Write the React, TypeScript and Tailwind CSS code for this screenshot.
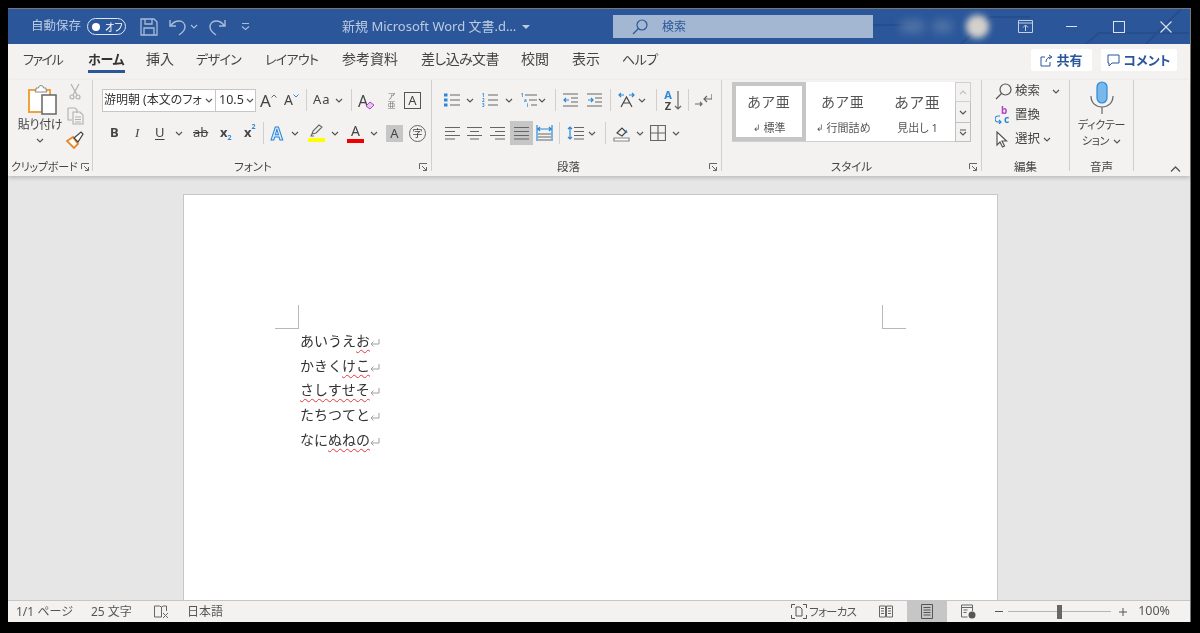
import React from "react";

const Chev = ({ className = "", color = "#555" }: { className?: string; color?: string }) => (
  <svg className={"shrink-0 " + className} width="8" height="5" viewBox="0 0 8 5" fill="none" stroke={color} strokeWidth="1.2">
    <path d="M1 1l3 3 3-3" />
  </svg>
);
const Sep = ({ className = "" }: { className?: string }) => <div className={"w-px h-[22px] bg-[#d2d0ce] shrink-0 " + className} />;
const Launcher = ({ className = "" }: { className?: string }) => (
  <svg className={className} width="9" height="9" viewBox="0 0 9 9" fill="none" stroke="#666" strokeWidth="1">
    <path d="M.5 6V.5H8M3 3l4.5 4.5M7.5 4v3.500H4" />
  </svg>
);
const L = ({ className, d, w = 16, h = 14, children }: { className?: string; d?: string; w?: number; h?: number; children?: React.ReactNode }) => (
  <svg className={"shrink-0 " + (className || "")} width={w} height={h} viewBox={`0 0 ${w} ${h}`} fill="none" stroke="#666" strokeWidth="1.2">
    {d && <path d={d} />}
    {children}
  </svg>
);
const Group = ({ w, label, labelClass = "", children, launcher = true }: { w: string; label: string; labelClass?: string; children: React.ReactNode; launcher?: boolean }) => (
  <div className={w + " h-[91px] border-r border-[#d2d0ce] flex flex-col shrink-0"}>
    <div className="flex-1 min-h-0">{children}</div>
    <div className="h-[14px] mb-[-3px] grid grid-cols-[1fr_auto_1fr] items-center text-[11.5px] leading-[14px] text-[#444]">
      <span />
      <span className={labelClass}>{label}</span>
      {launcher ? <Launcher className="justify-self-end mr-[3px]" /> : <span />}
    </div>
  </div>
);
const Marked = () => (
  <svg className="inline-block align-[-2px]" width="10" height="10" viewBox="0 0 10 10" fill="none" stroke="#a0a0a0" strokeWidth="1">
    <path d="M9 1v5H1M3.500 3.500L1 6l2.500 2.500" />
  </svg>
);
const Wavy = ({ children }: { children: React.ReactNode }) => (
  <span className="underline decoration-wavy decoration-[#e8373c] [text-decoration-thickness:1.4px] underline-offset-[3px]">{children}</span>
);
const Style = ({ head, label, arrow, big, w, selected }: { head: string; label: string; arrow?: boolean; big?: boolean; w: string; selected?: boolean }) => (
  <div className={w + " h-full flex flex-col items-center shrink-0 " + (selected ? "border-[4px] border-[#c6c6c6] pt-[4px]" : "pt-[8px]")}>
    <span className={(big ? "text-[15px] " : "text-[14px] ") + "leading-[24px] tracking-[1px] text-[#555]"}>{head}</span>
    <span className="mt-[6px] text-[11px] leading-[16px] text-[#555] flex items-center gap-[3px]">
      {arrow && <span className="text-[9px]">↲</span>}
      {label}
    </span>
  </div>
);

export default function App() {
  return (
    <div className="w-[1200px] h-[633px] bg-black overflow-hidden pt-[8px] pl-[8px] font-['Noto_Sans','Noto_Sans_CJK_JP',sans-serif] [font-feature-settings:'palt'] blur-[0.35px]">
      <div className="w-[1183px] h-[614px] flex flex-col bg-[#f3f2f1] border-t border-r border-[#777]">
        {/* Title bar */}
        <div className="h-[35px] shrink-0 bg-[#2b579a] flex items-center relative overflow-hidden text-[#bccbe0] text-[12.5px]">
          <svg className="absolute right-0 top-0" width="330" height="36" viewBox="0 0 330 36" fill="none" stroke="#264e8c" strokeWidth="2">
            <path d="M0 16h60M100 36L130 8M130 8h40M225 36l14-12h90M285 36l36-36" />
          </svg>
          <span className="ml-[23px] w-[50px] whitespace-nowrap relative">自動保存</span>
          <div className="ml-[6px] w-[39px] h-[17px] rounded-full border border-[#dfe6f0] flex items-center pl-[4px] relative">
            <div className="w-[8px] h-[8px] rounded-full bg-white" />
            <span className="ml-[5px] text-[10px] leading-none text-white">オフ</span>
          </div>
          <svg className="ml-[14px] shrink-0 relative" width="18" height="18" viewBox="0 0 18 18" fill="none" stroke="#a9bcd8" strokeWidth="1.3">
            <path d="M1 1h13l3 3v13H1zM5 1v5h7V1M4 17v-7h10v7" />
          </svg>
          <svg className="ml-[11px] shrink-0 relative" width="18" height="18" viewBox="0 0 18 18" fill="none" stroke="#a9bcd8" strokeWidth="1.4">
            <path d="M1 2v6h6M1.500 8C4 4 7 3 10 3c4 0 6 3 6 6 0 4-3 6-6 8" />
          </svg>
          <Chev className="ml-[3px]" color="#a9bcd8" />
          <svg className="ml-[11px] shrink-0 relative" width="17" height="18" viewBox="0 0 17 18" fill="none" stroke="#a9bcd8" strokeWidth="1.4">
            <path d="M16 2v6h-6M15.500 8C13 4 10 3 7 3 3 3 1 6 1 9c0 4 3 6 6 8" />
          </svg>
          <svg className="ml-[15px] shrink-0 relative" width="9" height="9" viewBox="0 0 9 9" fill="none" stroke="#a9bcd8" strokeWidth="1.100">
            <path d="M1 1.500h7M1 4.500l3.500 3 3.500-3" />
          </svg>
          <span className="ml-[92px] w-[172px] whitespace-nowrap relative text-[13px]">新規 Microsoft Word 文書.d…</span>
          <svg className="ml-[8px] shrink-0 relative" width="8" height="4" viewBox="0 0 8 4" fill="#bccbe0"><path d="M0 0h8L4 4z" /></svg>
          <div className="ml-[83px] w-[260px] h-[23px] bg-[#a3b7d2] flex items-center relative shrink-0">
            <svg className="ml-[19px]" width="16" height="16" viewBox="0 0 16 16" fill="none" stroke="#2b579a" strokeWidth="1.2">
              <circle cx="10" cy="6" r="5" /><path d="M6.500 9.500L1 15" />
            </svg>
            <span className="ml-[14px] text-[12px] text-[#2b579a]">検索</span>
          </div>
          <div className="ml-[27px] w-[25px] h-[13px] rounded-full bg-[#4f72a5] blur-[4px] shrink-0" />
          <div className="ml-[7px] w-[21px] h-[13px] rounded-full bg-[#4f72a5] blur-[4px] shrink-0" />
          <div className="ml-[13px] w-[23px] h-[23px] rounded-full bg-[#d4d1cb] blur-[3px] shrink-0" />
          <svg className="ml-[29px] shrink-0 relative" width="15" height="13" viewBox="0 0 15 13" fill="none" stroke="#c4d1e4" strokeWidth="1">
            <path d="M.5.500h14v12H.5zM.5 3h14M7.500 11V5.500M5 7.500l2.500-2.500L10 7.500" />
          </svg>
          <div className="ml-[33px] w-[11px] h-px bg-[#dbe3ef] shrink-0 relative" />
          <div className="ml-[36px] w-[12px] h-[12px] border border-[#dbe3ef] shrink-0 relative" />
          <svg className="ml-[35px] shrink-0 relative" width="12" height="12" viewBox="0 0 12 12" stroke="#dbe3ef" strokeWidth="1.100">
            <path d="M.5.500l11 11M11.500.500l-11 11" />
          </svg>
        </div>

        {/* Tabs */}
        <div className="h-[36px] shrink-0 flex items-start text-[14px] leading-[20px] text-[#444] pt-[5px] whitespace-nowrap">
          <span className="ml-[15px] w-[65px] text-[13px] tracking-[-1.400px]">ファイル</span>
          <span className="w-[58px] h-[24px] font-bold text-[#333]">
            <span className="inline-block w-[37px] h-[24px] text-[13px] tracking-[-0.3px] border-b-[3px] border-[#2b579a] overflow-visible">ホーム</span>
          </span>
          <span className="w-[50px]">挿入</span>
          <span className="w-[69px] text-[13px] tracking-[-0.600px]">デザイン</span>
          <span className="w-[77px] text-[13px] tracking-[-0.700px]">レイアウト</span>
          <span className="w-[79px]">参考資料</span>
          <span className="w-[100px] tracking-[-0.600px]">差し込み文書</span>
          <span className="w-[51px]">校閲</span>
          <span className="w-[50px]">表示</span>
          <span className="text-[13px] tracking-[-0.500px]">ヘルプ</span>
          <div className="ml-auto flex gap-[9px] mr-[13px] text-[13px]">
            <div className="w-[61px] h-[22px] bg-white rounded-[2px] flex items-center justify-center gap-[3px] font-bold text-[#2b579a]">
              <svg width="13" height="13" viewBox="0 0 13 13" fill="none" stroke="#2b579a" strokeWidth="1"><path d="M5 3H1v9h9V8M6 8c0-3 2-5 5-5M9 1l3 2-3 2" /></svg>
              共有
            </div>
            <div className="w-[76px] h-[22px] bg-white rounded-[2px] flex items-center justify-center gap-[3px] font-bold text-[#2b579a]">
              <svg width="13" height="13" viewBox="0 0 13 13" fill="none" stroke="#2b579a" strokeWidth="1"><path d="M1 1h11v8H5l-3 3V9H1z" /></svg>
              コメント
            </div>
          </div>
        </div>

        {/* Ribbon */}
        <div className="h-[96px] shrink-0 flex relative z-10 shadow-[0_2px_4px_rgba(0,0,0,0.18)] bg-[#f3f2f1] text-[#444]">
          {/* Clipboard */}
          <div className="w-[85px] h-[91px] border-r border-[#d2d0ce] flex flex-col shrink-0">
            <div className="flex-1 flex min-h-0">
              <div className="ml-[9px] w-[46px] flex flex-col items-center pt-[4px]">
                <svg className="ml-[6px]" width="30" height="31" viewBox="0 0 30 31" fill="none">
                  <path d="M1 6h21v22H1z" fill="#fff" stroke="#f0a33a" strokeWidth="2" />
                  <path d="M8 6V4h2.500a2.500 2.500 0 015 0H18v2l1 2H7z" fill="#fff" stroke="#8a8a8a" />
                  <rect x="14" y="11" width="14" height="19" fill="#fff" stroke="#666" strokeWidth="1.500" />
                </svg>
                <span className="mt-[2px] text-[12px] leading-[16px] tracking-[-0.300px] whitespace-nowrap">貼り付け</span>
                <Chev className="mt-[5px]" />
              </div>
              <div className="ml-[2px] w-[20px] flex flex-col items-center pt-[3px]">
                <svg width="12" height="17" viewBox="0 0 12 17" fill="none" stroke="#b0b0b0" strokeWidth="1.200">
                  <path d="M2 1l6 11M10 1L4 12" /><circle cx="3" cy="14" r="2" /><circle cx="9" cy="14" r="2" />
                </svg>
                <svg className="mt-[7px]" width="17" height="18" viewBox="0 0 17 18" fill="none" stroke="#b0b0b0" strokeWidth="1.100">
                  <path d="M1 1h7l2 2v3M1 1v12h4M6 5h7l3 3v9H6zM8 10h6M8 12.500h6M8 15h6" />
                </svg>
                <svg className="mt-[6px]" width="18" height="18" viewBox="0 0 18 18" fill="none">
                  <path d="M1 10l6-4 5 7-4 4z" fill="#fff" stroke="#e8872b" strokeWidth="1.800" />
                  <path d="M8 7l7-6 2 2-5 8z" fill="#fff" stroke="#444" strokeWidth="1.200" />
                </svg>
              </div>
            </div>
            <div className="h-[14px] mb-[-3px] flex items-center pl-[3px] text-[11px] leading-[14px] tracking-[-0.200px]">
              <span className="w-[70px] whitespace-nowrap">クリップボード</span>
              <Launcher />
            </div>
          </div>

          {/* Font */}
          <Group w="w-[339px]" label="フォント" labelClass="mr-[18px]">
            <div className="pt-[8px]">
              <div className="h-[24px] flex items-center">
                <div className="ml-[9px] w-[114px] h-[23px] bg-white border border-[#c8c6c4] flex items-center pl-[1px] text-[12px] text-[#333] whitespace-nowrap overflow-hidden">
                  <span className="flex-1">游明朝 (本文のフォ</span>
                  <Chev className="mx-[2px]" />
                </div>
                <div className="ml-[-1px] w-[41px] h-[23px] bg-white border border-[#c8c6c4] flex items-center pl-[3px] text-[12.5px] text-[#333]">
                  <span className="flex-1">10.5</span>
                  <Chev className="mx-[2px]" />
                </div>
                <span className="ml-[4px] w-[18px] text-[17px] leading-none flex items-start">A<svg className="mt-[2px] shrink-0" width="6" height="4" viewBox="0 0 6 4" fill="none" stroke="#666"><path d="M.5 3.500L3 1l2.500 2.500" /></svg></span>
                <span className="ml-[6px] w-[17px] text-[14px] leading-none flex items-start">A<svg className="mt-[1px] shrink-0" width="6" height="4" viewBox="0 0 6 4" fill="none" stroke="#2b88d8"><path d="M.5.500L3 3 5.500.500" /></svg></span>
                <Sep className="ml-[5px]" />
                <span className="ml-[6px] w-[22px] text-[13px] tracking-[1px] whitespace-nowrap">Aa</span>
                <Chev />
                <Sep className="ml-[8px]" />
                <span className="ml-[6px] w-[18px] h-[20px] text-[16px] leading-[18px] flex items-end">A<svg className="ml-[-3px] shrink-0" width="10" height="9" viewBox="0 0 10 9" fill="#e8c6ee" stroke="#b146c2"><path d="M1 5l4-4 4 3-4 4z" /></svg></span>
                <span className="ml-[10px] w-[11px] flex flex-col items-center text-[8px] leading-[9px] text-[#777]"><span>ア</span><span>亜</span></span>
                <span className="ml-[7px] w-[17px] h-[17px] border border-[#555] flex items-center justify-center text-[13px] leading-none">A</span>
              </div>
              <div className="mt-[9px] h-[24px] flex items-center">
                <span className="ml-[17px] w-[8px] text-[13px] font-bold">B</span>
                <span className="ml-[17px] w-[6px] text-[13px] italic font-['Liberation_Serif',serif]">I</span>
                <span className="ml-[14px] w-[8px] text-[13px] underline underline-offset-2">U</span>
                <Chev className="ml-[12px]" />
                <span className="ml-[10px] w-[16px] text-[13px] line-through">ab</span>
                <span className="ml-[11px] w-[13px] text-[13px] font-bold flex items-end">x<span className="text-[7px] leading-[10px] text-[#2b88d8]">2</span></span>
                <span className="ml-[11px] w-[12px] text-[13px] font-bold flex items-start">x<span className="text-[7px] leading-[8px] text-[#2b88d8]">2</span></span>
                <Sep className="ml-[7px]" />
                <span className="ml-[7px] w-[16px] text-[17px] font-bold leading-none text-[#dbeafa] [-webkit-text-stroke:1px_#2b88d8]">A</span>
                <Chev className="ml-[4px]" />
                <div className="ml-[9px] w-[17px] flex flex-col items-center">
                  <svg width="14" height="13" viewBox="0 0 14 13" fill="none" stroke="#666" strokeWidth="1.100"><path d="M2 10l1-3 6-6 3 2-6 6zM2 10l-1 2h3" /></svg>
                  <div className="mt-[1px] w-[17px] h-[4px] bg-[#ffff00]" />
                </div>
                <Chev className="ml-[6px]" />
                <div className="ml-[8px] w-[17px] flex flex-col items-center">
                  <span className="text-[14px] leading-[14px]">A</span>
                  <div className="mt-[1px] w-[17px] h-[4px] bg-[#f00000]" />
                </div>
                <Chev className="ml-[6px]" />
                <span className="ml-[8px] w-[17px] h-[17px] bg-[#c6c6c6] flex items-center justify-center text-[13px] leading-none">A</span>
                <span className="ml-[6px] w-[17px] h-[17px] rounded-full border border-[#666] flex items-center justify-center text-[10px] leading-none">字</span>
              </div>
            </div>
          </Group>

          {/* Paragraph */}
          <Group w="w-[290px]" label="段落" labelClass="mr-[16px]">
            <div className="pt-[8px]">
              <div className="h-[24px] flex items-center">
                <L className="ml-[12px]" d="M6 2h10M6 7h10M6 12h10"><path d="M0 .500h3.500v3H0zM0 5.500h3.500v3H0zM0 10.500h3.500v3H0z" fill="#2b88d8" stroke="none" /></L>
                <Chev className="ml-[6px]" />
                <L className="ml-[8px]" d="M6 2h10M6 7h10M6 12h10"><g fill="#2b88d8" stroke="none" fontSize="4.500" fontWeight="bold" fontFamily="Noto Sans"><text x="0" y="4">1</text><text x="0" y="9">2</text><text x="0" y="14">3</text></g></L>
                <Chev className="ml-[7px]" />
                <L className="ml-[8px]" d="M4 2h12M8 7h8M10 12h6"><g fill="#2b88d8" stroke="none" fontSize="4.500" fontWeight="bold" fontFamily="Noto Sans"><text x="0" y="4">1</text><text x="3" y="9">a</text><text x="6" y="14">i</text></g></L>
                <Chev className="ml-[1px]" />
                <Sep className="ml-[9px]" />
                <L className="ml-[7px]" d="M0 1h15M8 5h7M8 9h7M0 13h15"><path d="M6 7H1M3 5L1 7l2 2" stroke="#2b88d8" /></L>
                <L className="ml-[8px]" d="M0 1h15M8 5h7M8 9h7M0 13h15"><path d="M1 7h5M4 5l2 2-2 2" stroke="#2b88d8" /></L>
                <Sep className="ml-[7px]" />
                <L className="ml-[7px]" w={17} h={16}>
                  <path d="M3 15L8.500 5 14 15M5 11h7" stroke="#444" />
                  <path d="M1 3h5M3 1L1 3l2 2M11 3h5M14 1l2 2-2 2" stroke="#2b88d8" />
                </L>
                <Chev className="ml-[3px]" />
                <Sep className="ml-[10px]" />
                <span className="ml-[6px] w-[10px] flex flex-col items-center text-[11px] leading-[11px] font-bold"><span className="text-[#2b88d8]">A</span><span>Z</span></span>
                <L className="ml-[1px]" w={8} h={20} d="M4 1v18M1 16l3 3 3-3" />
                <Sep className="ml-[6px]" />
                <L className="ml-[6px]" w={17} h={15} d="M17 1v5H9M12 3L9 6l3 3M0 11h7M5 9l2 2-2 2" />
              </div>
              <div className="mt-[9px] h-[24px] flex items-center">
                <L className="ml-[13px]" w={15} d="M0 1.500h15M0 5.500h10M0 9.500h15M0 13h10" />
                <L className="ml-[7px]" w={15} d="M0 1.500h15M3 5.500h9M0 9.500h15M3 13h9" />
                <L className="ml-[8px]" w={15} d="M0 1.500h15M5 5.500h10M0 9.500h15M5 13h10" />
                <div className="ml-[5px] w-[23px] h-[24px] bg-[#c6c6c6] flex items-center justify-center">
                  <L w={15} d="M0 1.500h15M0 5.500h15M0 9.500h15M0 13h15" />
                </div>
                <L className="ml-[3px]" w={17} h={16} d="M2 9h13M2 12h13M2 15h13"><path d="M1 0v16M16 0v16M2 4h13M4 2L2 4l2 2M13 2l2 2-2 2" stroke="#2b88d8" /></L>
                <Sep className="ml-[6px]" />
                <L className="ml-[7px]" w={17} d="M7 1.500h10M7 5.500h10M7 9.500h10M7 13h10"><path d="M3 1v12M1 3l2-2 2 2M1 11l2 2 2-2" stroke="#2b88d8" /></L>
                <Chev className="ml-[4px]" />
                <Sep className="ml-[9px]" />
                <L className="ml-[7px]" w={17} h={17}>
                  <path d="M4 8l5-5 4 4-4 4z" stroke="#444" /><path d="M13 5l1 3" stroke="#2b88d8" />
                  <path d="M1 13h15v3H1z" stroke="#888" fill="#fff" />
                </L>
                <Chev className="ml-[6px]" />
                <L className="ml-[6px]" w={16} h={16} d="M.5.500h15v15H.5zM8 .500v15M.5 8h15" />
                <Chev className="ml-[6px]" />
              </div>
            </div>
          </Group>

          {/* Styles */}
          <Group w="w-[260px]" label="スタイル">
            <div className="pl-[10px] pt-[2px] flex">
              <div className="w-[223px] h-[60px] bg-white flex border-b border-[#d2d0ce]">
                <Style w="w-[74px]" head="あア亜" label="標準" arrow selected />
                <Style w="w-[74px]" head="あア亜" label="行間詰め" arrow />
                <Style w="w-[75px]" head="あア亜" label="見出し 1" big />
              </div>
              <div className="w-[16px] h-[60px] flex flex-col">
                <div className="h-[20px] bg-[#f3f2f1] border border-[#d2d0ce] flex items-center justify-center"><svg width="8" height="5" viewBox="0 0 8 5" fill="none" stroke="#c0c0c0" strokeWidth="1.200"><path d="M1 4l3-3 3 3" /></svg></div>
                <div className="h-[20px] border-x border-[#c0c0c0] flex items-center justify-center"><Chev /></div>
                <div className="h-[20px] border border-[#c0c0c0] flex items-center justify-center"><svg width="8" height="7" viewBox="0 0 8 7" fill="none" stroke="#555" strokeWidth="1.100"><path d="M1 1h6M1 3l3 3 3-3" /></svg></div>
              </div>
            </div>
          </Group>

          {/* Edit */}
          <Group w="w-[88px]" label="編集" launcher={false}>
            <div className="pl-[13px] mt-[-1px] flex flex-col text-[12.5px]">
              <div className="h-[24px] flex items-center">
                <svg className="shrink-0" width="17" height="17" viewBox="0 0 17 17" fill="none" stroke="#555" strokeWidth="1.200"><circle cx="10.500" cy="6.500" r="5.500" /><path d="M6.500 10.500L1 16" /></svg>
                <span className="ml-[3px] w-[36px]">検索</span>
                <Chev className="ml-[1px]" />
              </div>
              <div className="h-[24px] flex items-center">
                <span className="w-[17px] h-[18px] flex flex-col leading-[9px] text-[10px] font-bold">
                  <span className="ml-[6px] text-[#b146c2]">b</span>
                  <span className="flex items-center"><svg className="shrink-0" width="9" height="9" viewBox="0 0 9 9" fill="none" stroke="#2b88d8" strokeWidth="1.200"><path d="M5 1H3a2.500 2.500 0 000 6h3M4 5l2 2-2 2" /></svg><span className="text-[#2b88d8]">c</span></span>
                </span>
                <span className="ml-[3px]">置換</span>
              </div>
              <div className="h-[24px] flex items-center">
                <svg className="shrink-0 ml-[1px]" width="14" height="17" viewBox="0 0 14 17" fill="#fff" stroke="#555" strokeWidth="1.200"><path d="M1 1v13l3-3 2.500 5 2-1-2.500-5h4.500z" /></svg>
                <span className="ml-[5px] w-[28px]">選択</span>
                <Chev />
              </div>
            </div>
          </Group>

          {/* Voice */}
          <Group w="w-[64px]" label="音声" launcher={false}>
            <div className="flex flex-col items-center pt-[1px]">
              <svg width="24" height="34" viewBox="0 0 24 34" fill="none">
                <rect x="7" y="1" width="10" height="21" rx="5" fill="#79b8eb" stroke="#2b88d8" strokeWidth="1.200" />
                <path d="M1 15c0 7 5 11 11 11s11-4 11-11M12 26v7" stroke="#666" strokeWidth="1.200" />
              </svg>
              <span className="mt-[1px] text-[11px] tracking-[-0.300px] leading-[17px] whitespace-nowrap">ディクテー</span>
              <span className="text-[11px] tracking-[-0.300px] leading-[16px] flex items-center gap-[4px] whitespace-nowrap">ション<Chev /></span>
            </div>
          </Group>

          <div className="flex-1 h-[91px] flex items-end justify-end pr-[9px]">
            <svg className="mb-[-1px]" width="11" height="6" viewBox="0 0 11 6" fill="none" stroke="#555" strokeWidth="1.300"><path d="M1 5.500L5.500 1 10 5.500" /></svg>
          </div>
        </div>

        {/* Document */}
        <div className="flex-1 min-h-0 bg-[#e6e6e6] overflow-hidden pl-[175px] pt-[18px]">
          <div className="w-[815px] h-[420px] bg-white border border-[#c6c6c6] pt-[110px] text-[#333] [font-feature-settings:normal]">
            <div className="flex justify-between px-[91px]">
              <div className="w-[24px] h-[24px] border-r border-b border-[#b8b8b8]" />
              <div className="w-[24px] h-[24px] border-l border-b border-[#b8b8b8]" />
            </div>
            <div className="ml-[116px] text-[14px] leading-[24.700px] whitespace-nowrap">
              <div>あいうえ<Wavy>お</Wavy><Marked /></div>
              <div>かきく<Wavy>けこ</Wavy><Marked /></div>
              <div><Wavy>さしすせそ</Wavy><Marked /></div>
              <div>たちつてと<Marked /></div>
              <div>なに<Wavy>ぬねの</Wavy><Marked /></div>
            </div>
          </div>
        </div>

        {/* Status */}
        <div className="h-[22px] shrink-0 bg-[#f3f2f1] border-t border-[#c8c6c4] flex items-center text-[12px] leading-none text-[#555]">
          <span className="ml-[8px] w-[75px] whitespace-nowrap">1/1 ページ</span>
          <span className="w-[63px] whitespace-nowrap">25 文字</span>
          <svg className="shrink-0" width="15" height="14" viewBox="0 0 15 14" fill="none" stroke="#666"><path d="M.5 1h5l2 1v10h-7zM7.500 2l2-1h3v5M9 8l5 5M14 8l-5 5" /></svg>
          <span className="ml-[18px] whitespace-nowrap">日本語</span>
          <div className="flex-1" />
          <svg className="shrink-0" width="16" height="15" viewBox="0 0 16 15" fill="none" stroke="#555"><path d="M.5 4V.5H4M12 .5h3.500V4M.5 11v3.500H4M12 14.500h3.500V11M5 3h4l2 2v7H5z" /></svg>
          <span className="ml-[2px] w-[70px] text-[11.500px] tracking-[-0.800px] whitespace-nowrap">フォーカス</span>
          <svg className="shrink-0" width="14" height="13" viewBox="0 0 14 13" fill="none" stroke="#666"><path d="M.5 1h6v11h-6zM7.500 1h6v11h-6zM2 3.500h3M2 6h3M2 8.500h3M9 3.500h3M9 6h3M9 8.500h3" /></svg>
          <div className="ml-[14px] w-[40px] h-full bg-[#c6c6c6] flex items-center justify-center">
            <svg width="12" height="15" viewBox="0 0 12 15" fill="none" stroke="#555"><path d="M.5.500h11v14H.5zM2.500 3.500h7M2.500 6h7M2.500 8.500h7M2.500 11h7" /></svg>
          </div>
          <svg className="ml-[14px] shrink-0" width="15" height="15" viewBox="0 0 15 15" fill="none" stroke="#666"><path d="M.5 1h11v6M.5 1v12h6M.5 3.500h11M2.500 6h4M2.500 8.500h3" /><circle cx="11" cy="11" r="3.500" fill="#555" stroke="none" /></svg>
          <span className="ml-[19px] w-[8px] h-px bg-[#555] shrink-0" />
          <div className="ml-[5px] w-[103px] h-[14px] flex items-center shrink-0">
            <div className="w-[49px] h-px bg-[#b5b5b5]" />
            <div className="w-[5px] h-[14px] bg-[#666]" />
            <div className="flex-1 h-px bg-[#b5b5b5]" />
          </div>
          <svg className="ml-[8px] shrink-0" width="8" height="8" viewBox="0 0 8 8" stroke="#555"><path d="M0 4h8M4 0v8" /></svg>
          <span className="ml-[11px] text-[12.500px]">100%</span>
          <div className="w-[20px] shrink-0" />
        </div>
      </div>
    </div>
  );
}
